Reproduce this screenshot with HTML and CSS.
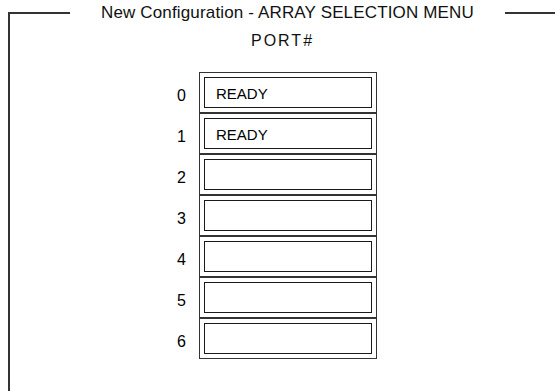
FILE: index.html
```html
<!DOCTYPE html>
<html lang="en">
<head>
    <meta charset="UTF-8">
    <meta name="viewport" content="width=device-width, initial-scale=1.0">
    <title>New Configuration - ARRAY SELECTION MENU</title>
    <link rel="stylesheet" href="styles.css">
</head>
<body>
    <fieldset class="frame">
        <legend class="frame-title">New Configuration - ARRAY SELECTION MENU</legend>

        <div class="port-head">PORT#</div>

        <div class="ports">
            <div class="port"><span class="port-num">0</span><div class="port-box"><div class="port-state">READY</div></div></div>
            <div class="port"><span class="port-num">1</span><div class="port-box"><div class="port-state">READY</div></div></div>
            <div class="port"><span class="port-num">2</span><div class="port-box"><div class="port-state"></div></div></div>
            <div class="port"><span class="port-num">3</span><div class="port-box"><div class="port-state"></div></div></div>
            <div class="port"><span class="port-num">4</span><div class="port-box"><div class="port-state"></div></div></div>
            <div class="port"><span class="port-num">5</span><div class="port-box"><div class="port-state"></div></div></div>
            <div class="port"><span class="port-num">6</span><div class="port-box"><div class="port-state"></div></div></div>
        </div>
    </fieldset>
</body>
</html>
```

FILE: styles.css
```css
html, body { margin: 0; height: 100%; overflow: hidden; background: #fff; }
body { font-family: "Liberation Sans", Arial, sans-serif; font-size: 15px; color: #111; }

.frame { margin: 3px 0 0 8px; padding: 0; height: 400px; border: none; border-top: 2px solid #333; border-left: 2px solid #333; }
.frame-title { margin-left: 60px; padding: 0 31px; font-size: 17px; letter-spacing: 0.15px; }

.port-head { margin-top: 9px; text-align: center; font-size: 16px; letter-spacing: 2px; }

.ports { margin: 22px 0 0 155px; }
.port { display: flex; align-items: center; }
.port-num { width: 21px; margin-right: 13px; text-align: right; padding-top: 7px; font-size: 16px; color: #000; }
.port-box { width: 168px; padding: 4px; border: 1px solid #333; }
.port-state { height: 29px; line-height: 32px; padding-left: 11px; border: 1px solid #1a1a1a; color: #000; }
```
